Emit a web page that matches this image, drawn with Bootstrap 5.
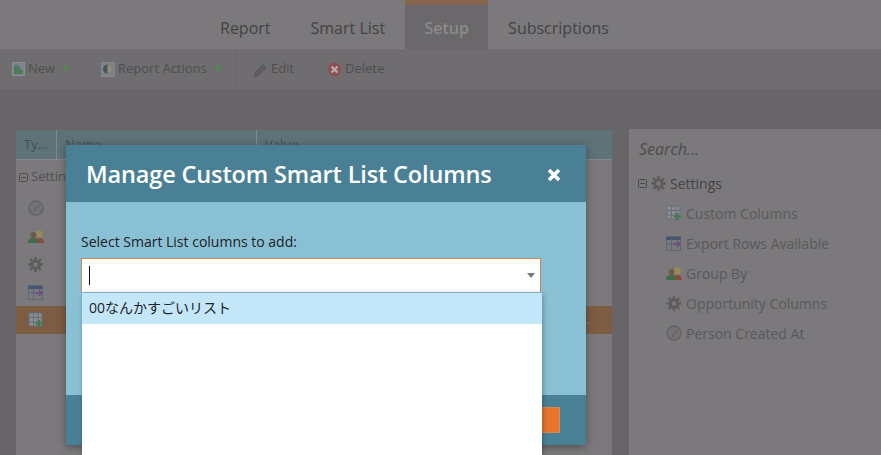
<!DOCTYPE html>
<html lang="en">
<head>
<meta charset="utf-8">
<title>Manage Custom Smart List Columns</title>
<link href="https://cdn.jsdelivr.net/npm/bootstrap@5.3.0/dist/css/bootstrap.min.css" rel="stylesheet">
<style>
html,body{height:455px;overflow:hidden}
body{background:#676567;font-family:"Open Sans","Noto Sans CJK JP",sans-serif;color:#454347;position:relative;width:881px}
.tabbar{height:49px;background:#7b797b;padding-left:200px}
.tabitem{padding:0 20px;line-height:57px;font-size:16px;color:#444246;height:49px}
.tabitem.on{background:#6a686a;border-top:5px solid #88664d;line-height:47px;font-weight:600;color:#8c8a8c;width:83px;padding:0;text-align:center}
.toolbar{height:40px;background:#6f6d6f;padding-left:12px;font-size:13px;color:#4f4d50}
.tool{gap:3px}
.tool svg{flex:none}
.tsep{width:1px;height:40px;background:#676567}
.tri{margin-left:4px}
.workarea{padding:40px 0 0 16px;gap:17px}
.grid-panel{width:596px;height:325px;margin-top:1px;background:#7b797b;font-size:13px}
.grid-head{height:30px;background:#5f7278;color:#454f54;border-bottom:1px solid #85898b}
.grid-head>div{padding:5px 8px;border-right:1px solid #7d8a90}
.grid-tree{padding:0 3px;height:34px;gap:3px;color:#504e51}
.grid-row{height:28px;padding-left:12px}
.grid-row.sel{background:#7d5c44;justify-content:space-between;padding-right:22px;color:#8d8478}
.side-panel{flex:1;height:326px;background:#7b797b}
.search-hint{font-style:italic;font-size:16px;padding:8px 10px 0;color:#4d4b4e;line-height:24px}
.tree-root{font-size:14px;color:#444246;margin:7px 0 0 9px;gap:4px;height:30px}
.tree-leaf{font-size:14px;color:#5a585b;padding-left:37px;height:30px;gap:4px}
.dlg{position:absolute;left:66px;top:145px;width:520px;height:300px;box-shadow:0 2px 8px rgba(0,0,0,.35)}
.dlg-head{height:57px;background:#4a8096;color:#fff;font-size:23.5px;font-weight:600;letter-spacing:-.14px;padding:3px 25px 0 20px}
.dlg-body{height:193px;background:#8ac0d4;padding:30px 15px 0;color:#1c2124;font-size:14px}
.dlg-foot{height:50px;background:#4a8096;padding:12px 26px 11px 0}
.dlg-go{width:58px;height:26px;background:#e8742e;border:1px solid #d98a55}
.picker{width:460px;height:34px;background:#fff;margin-top:7px;border:1px solid #c8884f;border-bottom:0;padding:0 5px 0 7px}
.caret-bar{width:1px;height:19px;background:#111}
.caret-arrow{width:0;height:0;border:4.500px solid transparent;border-top:5px solid #777;border-bottom:0}
.drop{position:absolute;left:82px;top:293px;width:460px;height:170px;background:#fff;box-shadow:1px 1px 5px rgba(0,0,0,.3);font-size:14px;color:#1c2124}
.drop-item{height:31px;background:#c3e7f9;padding:0 7px;line-height:30px}
.xmark{width:14px;height:14px}
</style>
</head>
<body>
<svg width="0" height="0" class="d-block position-absolute">
  <defs>
    <symbol id="i-clock" viewBox="0 0 16 16"><circle cx="8" cy="8" r="7" fill="#747275" stroke="#636164" stroke-width="1.300"/><path d="M11.500 6L7.500 8.500 6.500 12" fill="none" stroke="#5a585b" stroke-width=".9"/></symbol>
    <symbol id="i-people" viewBox="0 0 16 15"><circle cx="11" cy="5" r="3.500" fill="#9b8a57"/><path d="M7 14c0-4 2-5 4-5s5 1 5 5z" fill="#8a4c3e"/><circle cx="5.500" cy="6" r="3" fill="#6a5a4a"/><path d="M0 14c0-4 2-5 5.500-5S10 11 10 14z" fill="#44684a"/></symbol>
    <symbol id="i-gear" viewBox="0 0 15 15"><circle cx="7.500" cy="7.500" r="3.800" fill="none" stroke="#5e5c5f" stroke-width="3"/><path d="M7.500 0v3M7.500 12v3M0 7.500h3M12 7.500h3M2.200 2.200l2 2M10.800 10.800l2 2M2.200 12.800l2-2M10.800 4.200l2-2" stroke="#5e5c5f" stroke-width="2.400"/></symbol>
    <symbol id="i-export" viewBox="0 0 16 15"><rect x=".5" y=".5" width="14" height="14" fill="none" stroke="#59677c"/><path d="M.5 2.500h14" stroke="#46566e" stroke-width="3"/><path d="M5.500 3v11M.5 8h14" stroke="#59677c"/><path d="M7 8h6M10.500 5L14 8l-3.500 3" fill="none" stroke="#6d4b83" stroke-width="1.500"/></symbol>
    <symbol id="i-add" viewBox="0 0 16 16"><path d="M1 1h13v13H1zM5.500 1v13M10 1v13M1 5.500h13M1 10h13" fill="#8d8b8c" stroke="#5f7180"/><path d="M11 8v7M7.500 11.500H15" stroke="#47774c" stroke-width="2.200"/></symbol>
    <symbol id="i-minus" viewBox="0 0 9 9"><rect x=".5" y=".5" width="8" height="8" rx="1" fill="none" stroke="#4d4b4e"/><path d="M2 4.500h5" stroke="#4d4b4e"/></symbol>
  </defs>
</svg>
<nav class="tabbar d-flex">
  <div class="tabitem">Report</div>
  <div class="tabitem">Smart List</div>
  <div class="tabitem on">Setup</div>
  <div class="tabitem">Subscriptions</div>
</nav>
<div class="toolbar d-flex align-items-center">
  <div class="tool d-flex align-items-center" style="width:89px;gap:3px">
    <svg width="13" height="14" viewBox="0 0 13 14"><rect x=".5" y=".5" width="12" height="13" fill="#7b8590" stroke="#8a8d90"/><path d="M2 3h4l2 3 3 3v3H2z" fill="#4c7d55"/><path d="M2 3l6 5 3 1" fill="none" stroke="#5a7590"/></svg>
    <span>New</span>
    <svg class="tri" width="7" height="6" viewBox="0 0 7 6"><path d="M0 0h7L3.500 6z" fill="#4f8a4a"/></svg>
  </div>
  <div class="tool d-flex align-items-center" style="width:135px;gap:3px">
    <svg width="14" height="15" viewBox="0 0 14 15"><rect x=".5" y=".5" width="13" height="14" fill="#7d8388" stroke="#85898c"/><circle cx="6.500" cy="7" r="4.500" fill="#46545c"/><path d="M6.500 2.500a4.500 4.500 0 0 1 0 9z" fill="#8f8f72"/></svg>
    <span>Report Actions</span>
    <svg class="tri" width="7" height="6" viewBox="0 0 7 6"><path d="M0 0h7L3.500 6z" fill="#4f8a4a"/></svg>
  </div>
  <div class="tsep"></div>
  <div class="tool d-flex align-items-center" style="margin-left:17px;width:73px">
    <svg width="14" height="15" viewBox="0 0 14 15"><path d="M.5 14.500l1-4 7.500-8 3 3-7.500 8z" fill="#5f5d61" stroke="#555357" stroke-width=".8"/><path d="M9.500 2L11 .5l3 3L12.500 5z" fill="#58788c"/></svg>
    <span>Edit</span>
  </div>
  <div class="tool d-flex align-items-center">
    <svg width="15" height="15" viewBox="0 0 15 15"><circle cx="7.500" cy="7.500" r="7" fill="#8a5056" stroke="#7d6a6c" stroke-width=".8"/><path d="M4.500 4.500l6 6m0-6l-6 6" stroke="#b9afaf" stroke-width="2.200"/></svg>
    <span>Delete</span>
  </div>
</div>
<main class="workarea d-flex">
  <section class="grid-panel">
    <div class="grid-head d-flex">
      <div style="width:41px">Ty...</div>
      <div style="width:200px">Name</div>
      <div class="flex-grow-1 border-0">Value</div>
    </div>
    <div class="grid-tree d-flex align-items-center">
      <svg width="9" height="9"><use href="#i-minus"/></svg>
      <span>Settings</span>
    </div>
    <div class="grid-row d-flex align-items-center"><svg width="16" height="16"><use href="#i-clock"/></svg></div>
    <div class="grid-row d-flex align-items-center"><svg width="16" height="15"><use href="#i-people"/></svg></div>
    <div class="grid-row d-flex align-items-center"><svg width="15" height="15"><use href="#i-gear"/></svg></div>
    <div class="grid-row d-flex align-items-center"><svg width="16" height="15"><use href="#i-export"/></svg></div>
    <div class="grid-row sel d-flex align-items-center"><svg width="16" height="16"><use href="#i-add"/></svg><span>...</span></div>
  </section>
  <aside class="side-panel">
    <div class="search-hint">Search...</div>
    <div class="tree-root d-flex align-items-center">
      <svg width="9" height="9"><use href="#i-minus"/></svg>
      <svg width="15" height="15"><use href="#i-gear"/></svg>
      <span>Settings</span>
    </div>
    <div class="tree-leaf d-flex align-items-center"><svg width="16" height="16"><use href="#i-add"/></svg><span>Custom Columns</span></div>
    <div class="tree-leaf d-flex align-items-center"><svg width="16" height="15"><use href="#i-export"/></svg><span>Export Rows Available</span></div>
    <div class="tree-leaf d-flex align-items-center"><svg width="16" height="15"><use href="#i-people"/></svg><span>Group By</span></div>
    <div class="tree-leaf d-flex align-items-center"><svg width="16" height="15"><use href="#i-gear"/></svg><span>Opportunity Columns</span></div>
    <div class="tree-leaf d-flex align-items-center"><svg width="16" height="16"><use href="#i-clock"/></svg><span>Person Created At</span></div>
  </aside>
</main>
<div class="dlg" role="dialog">
  <div class="dlg-head d-flex align-items-center justify-content-between">
    <span>Manage Custom Smart List Columns</span>
    <svg class="xmark" viewBox="0 0 14 14"><path d="M2 2l10 10M12 2L2 12" stroke="#fff" stroke-width="3.600"/></svg>
  </div>
  <div class="dlg-body">
    <label class="d-block" style="line-height:19px">Select Smart List columns to add:</label>
    <div class="picker d-flex align-items-center justify-content-between">
      <span class="caret-bar"></span>
      <span class="caret-arrow"></span>
    </div>
  </div>
  <div class="dlg-foot d-flex justify-content-end"><div class="dlg-go"></div></div>
</div>
<div class="drop"><div class="drop-item">00なんかすごいリスト</div></div>
</body>
</html>
